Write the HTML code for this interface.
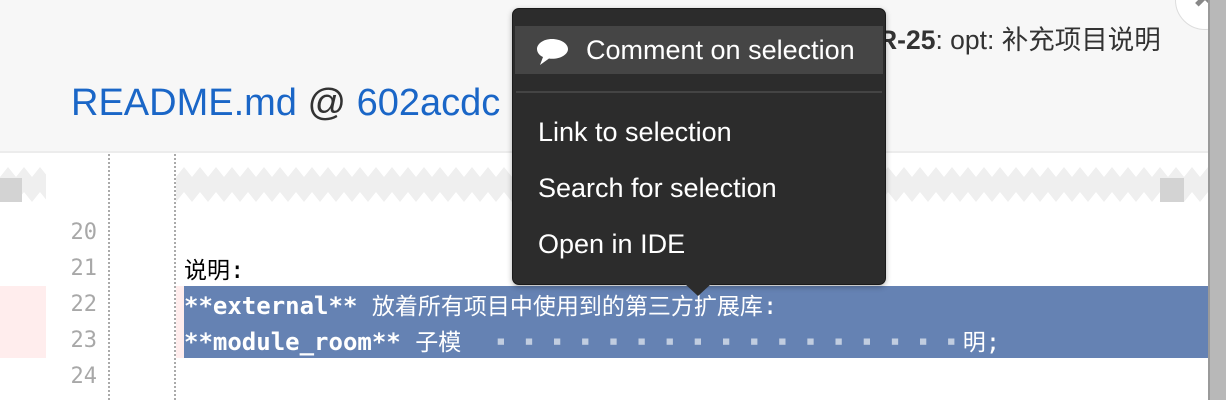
<!DOCTYPE html>
<html><head><meta charset="utf-8"><style>
*{margin:0;padding:0;box-sizing:border-box}
body{width:1226px;height:400px;overflow:hidden;background:#fff;position:relative;font-family:"Liberation Sans","Noto Sans CJK SC",sans-serif}
.abs{position:absolute}
.mono{font-family:"DejaVu Sans Mono","Liberation Mono","Noto Sans CJK SC",monospace}
.ln{position:absolute;left:40px;width:57px;text-align:right;font-size:22px;color:#a8a8a8;font-family:"DejaVu Sans Mono",monospace}
.code{position:absolute;left:184px;font-size:24px;white-space:nowrap;line-height:36px}
.cjk{font-family:"Noto Sans CJK SC",sans-serif;font-size:23px}
.item{position:absolute;left:25px;color:#fff;font-size:27px}
</style></head><body>
<div class="abs" style="left:0;top:0;width:1208px;height:153px;background:#f7f7f7;border-bottom:2px solid #ececec"></div>
<div class="abs" style="left:71px;top:82px;font-size:38px;color:#1a66c7;white-space:nowrap">README.md <span style="color:#333">@</span> 602acdc</div>
<div class="abs" style="left:878px;top:18px;font-size:26.5px;color:#333;white-space:nowrap"><b>R-25</b>: opt: 补充项目说明</div>
<div class="abs" style="left:1175px;top:-30px;width:60px;height:60px;border-radius:50%;background:#fff;border:1px solid #ddd"></div>
<div class="abs" style="left:1198px;top:-4px;width:14px;height:14px;border-left:5px solid #888;border-top:5px solid #888;transform:rotate(45deg)"></div>
<svg class="abs" style="left:0;top:165px" width="1208" height="40">
<defs><pattern id="z" width="16" height="40" patternUnits="userSpaceOnUse">
<path d="M0 12 L8 2 L16 12 L16 37 L8 27 L0 37Z" fill="#efefef"/></pattern></defs>
<rect x="0" y="0" width="46" height="40" fill="url(#z)"/>
<rect x="176" y="0" width="1032" height="40" fill="url(#z)"/>
<rect x="0" y="13" width="22" height="24" fill="#d3d3d3"/>
<rect x="1160" y="13" width="24" height="24" fill="#d3d3d3"/>
</svg>
<div class="abs" style="left:108px;top:154px;height:246px;border-left:2px dotted #aaa"></div>
<div class="abs" style="left:174px;top:154px;height:246px;border-left:2px dotted #aaa"></div>
<div class="abs" style="left:0;top:286px;width:46px;height:72px;background:#ffeded"></div>
<div class="abs" style="left:176px;top:286px;width:8px;height:72px;background:#ffeded"></div>
<div class="ln" style="top:220px">20</div>
<div class="ln" style="top:256px">21</div>
<div class="ln" style="top:292px">22</div>
<div class="ln" style="top:328px">23</div>
<div class="ln" style="top:364px">24</div>
<div class="abs" style="left:184px;top:286px;width:1024px;height:72px;background:#6582b3"></div>
<div class="code mono" style="top:250px;color:#000"><span class="cjk">说明</span>:</div>
<div class="code mono" style="top:286px;color:#fff"><b>**external**</b> <span class="cjk">放着所有项目中使用到的第三方扩展库</span>:</div>
<div class="code mono" style="top:322px;color:#fff"><b>**module_room**</b> <span class="cjk">子模<span style="opacity:.6">　 ▪ ▪ ▪ ▪ ▪ ▪ ▪ ▪ ▪ ▪ ▪ ▪ ▪ ▪ ▪ ▪ ▪</span>明</span>;</div>
<div class="abs" style="left:1208px;top:0;width:18px;height:400px;background:#b8b8b8;border-left:2px solid #9a9a9a"></div>
<div class="abs" style="left:512px;top:8px;width:374px;height:277px;background:#2c2c2c;border:1px solid #1a1a1a;border-radius:7px;box-shadow:0 2px 6px rgba(0,0,0,.3)">
<div class="abs" style="left:2px;top:17px;width:368px;height:48px;background:#454545"></div>
<svg class="abs" style="left:23px;top:28px" width="36" height="30" viewBox="0 0 36 30"><path d="M16 2C7 2 1 7 1 12c0 3.5 2.5 6.5 6 8l-3 8 9-6.5c1 .2 2 .3 3 .3 9 0 16-4.5 16-9.8S25 2 16 2z" fill="#fff"/></svg>
<div class="item" style="left:73px;top:26px">Comment on selection</div>
<div class="abs" style="left:3px;top:82px;width:366px;height:2px;background:#444"></div>
<div class="item" style="top:108px">Link to selection</div>
<div class="item" style="top:164px">Search for selection</div>
<div class="item" style="top:220px">Open in IDE</div>
</div>
<div class="abs" style="left:685px;top:284px;width:0;height:0;border-left:13px solid transparent;border-right:13px solid transparent;border-top:12px solid #2c2c2c"></div>
</body></html>
